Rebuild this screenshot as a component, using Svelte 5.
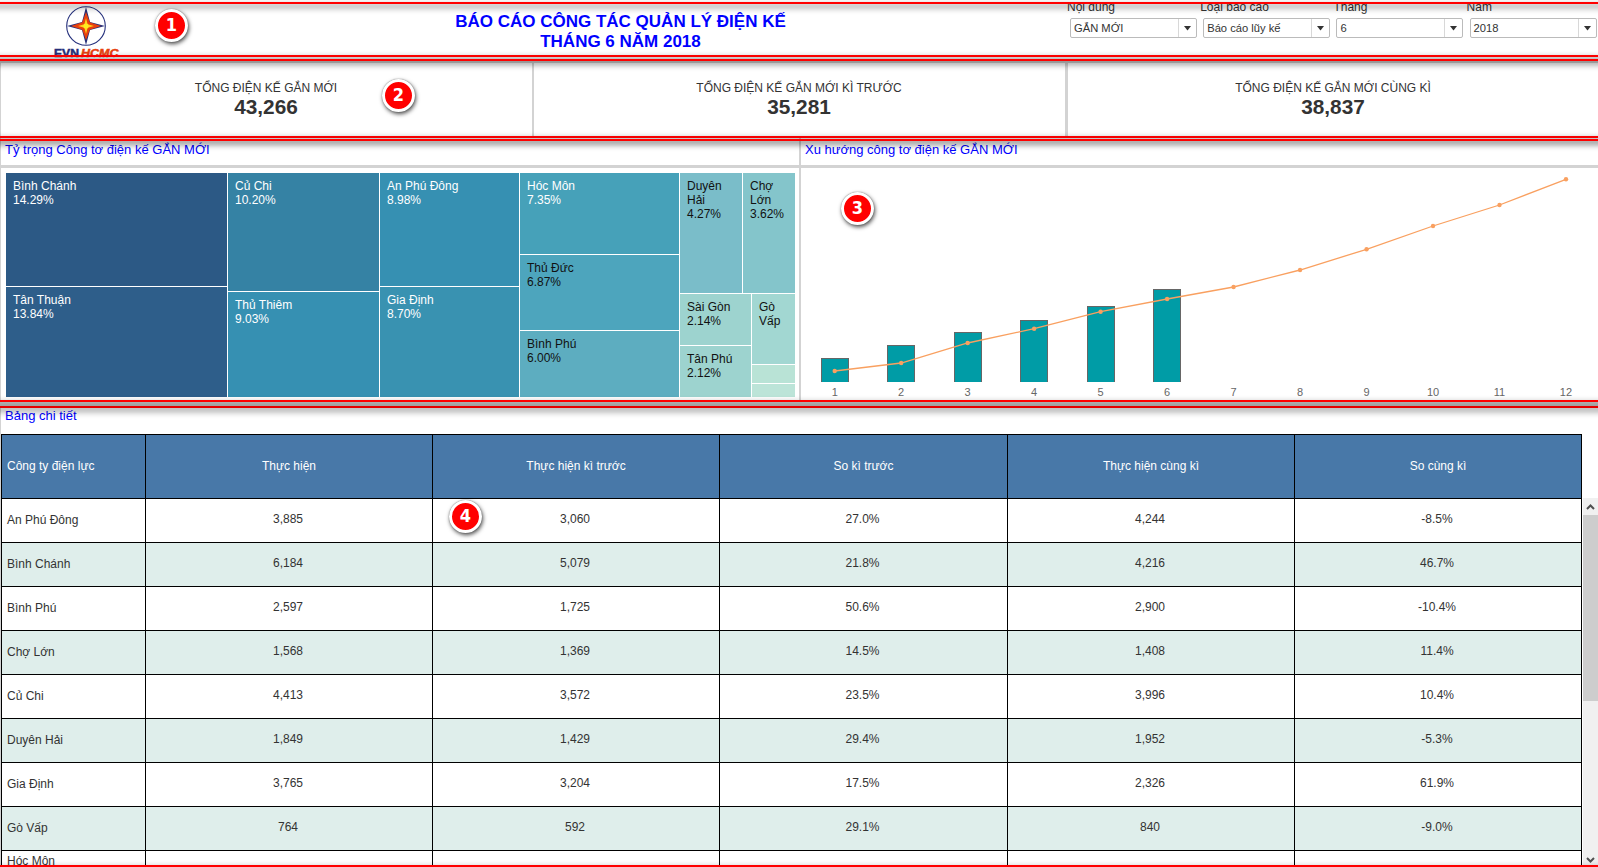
<script>
  const filters = [
    { label: 'Nội dung', value: 'GẮN MỚI' },
    { label: 'Loại báo cáo', value: 'Báo cáo lũy kế' },
    { label: 'Tháng', value: '6' },
    { label: 'Năm', value: '2018' }
  ];

  const kpis = [
    { label: 'TỔNG ĐIỆN KẾ GẮN MỚI', value: '43,266' },
    { label: 'TỔNG ĐIỆN KẾ GẮN MỚI KÌ TRƯỚC', value: '35,281' },
    { label: 'TỔNG ĐIỆN KẾ GẮN MỚI CÙNG KÌ', value: '38,837' }
  ];

  // Coordinates are local to the chart body (svg origin at its top-left corner).
  const points = [203, 195, 175, 160.7, 143.7, 131, 119, 102, 81.3, 58, 37, 11.3].map((y, i) => ({
    x: 33.7 + i * 66.48,
    y
  }));
  const line = points.map((p) => `${p.x},${p.y}`).join(' ');
  const bars = [
    [20, 190],
    [86, 177],
    [153, 164],
    [219, 152],
    [286, 138],
    [352, 121]
  ];

  const headers = ['Công ty điện lực', 'Thực hiện', 'Thực hiện kì trước', 'So kì trước', 'Thực hiện cùng kì', 'So cùng kì'];
  const rows = [
    ['An Phú Đông', '3,885', '3,060', '27.0%', '4,244', '-8.5%'],
    ['Bình Chánh', '6,184', '5,079', '21.8%', '4,216', '46.7%'],
    ['Bình Phú', '2,597', '1,725', '50.6%', '2,900', '-10.4%'],
    ['Chợ Lớn', '1,568', '1,369', '14.5%', '1,408', '11.4%'],
    ['Củ Chi', '4,413', '3,572', '23.5%', '3,996', '10.4%'],
    ['Duyên Hải', '1,849', '1,429', '29.4%', '1,952', '-5.3%'],
    ['Gia Định', '3,765', '3,204', '17.5%', '2,326', '61.9%'],
    ['Gò Vấp', '764', '592', '29.1%', '840', '-9.0%'],
    ['Hóc Môn', '', '', '', '', '']
  ];
</script>

{#snippet tile(name, pct, color, dark)}
  <div class="tile" class:dark style:background={color}>
    {#if name}<div>{name}</div>{/if}
    {#if pct}<div>{pct}</div>{/if}
  </div>
{/snippet}

<div class="page">
  <header>
    <svg class="logo" width="80" height="61" viewBox="0 0 80 61">
      <circle cx="41" cy="26" r="19.3" fill="#fff" stroke="#25307c" stroke-width="1.1" />
      <path d="M41 7 L45 22 L60 26 L45 30 L41 45 L37 30 L22 26 L37 22 Z" fill="#252d78" />
      <path d="M41 12 L44.8 22.2 L56 26 L44.8 29.8 L41 40 L37.2 29.8 L26 26 L37.2 22.2 Z" fill="#e8400e" />
      <path d="M41 18 L42.6 24.3 L49 26 L42.6 27.7 L41 34 L39.4 27.7 L33 26 L39.4 24.3 Z" fill="#ffd21c" />
      <circle cx="41" cy="26" r="2.6" fill="#ffed20" />
      <text x="9" y="57.2" textLength="25" lengthAdjust="spacingAndGlyphs" fill="#252d78" stroke="#252d78">EVN</text>
      <text x="36" y="57.2" textLength="37.5" lengthAdjust="spacingAndGlyphs" fill="#e8400e" stroke="#e8400e" font-style="italic">HCMC</text>
    </svg>
    <h1>BÁO CÁO CÔNG TÁC QUẢN LÝ ĐIỆN KẾ<br />THÁNG 6 NĂM 2018</h1>
    <div class="filters">
      {#each filters as f}
        <div class="filter">
          <div class="flabel">{f.label}</div>
          <div class="select">
            <span>{f.value}</span>
            <i><svg width="9" height="5" viewBox="0 0 9 5"><path d="M1 0h7L4.5 4.5z" fill="#333" /></svg></i>
          </div>
        </div>
      {/each}
    </div>
  </header>

  <section class="kpis">
    {#each kpis as k}
      <div class="kpi">
        <div class="klabel">{k.label}</div>
        <div class="kvalue">{k.value}</div>
      </div>
    {/each}
  </section>

  <section class="panels">
    <div class="panel left">
      <h2>Tỷ trọng Công tơ điện kế GẮN MỚI</h2>
      <div class="treemap">
        <div class="stack" style:grid-template-rows="113px 110px">
          {@render tile('Bình Chánh', '14.29%', '#2c5985')}
          {@render tile('Tân Thuận', '13.84%', '#2e5e8a')}
        </div>
        <div class="stack" style:grid-template-rows="118px 105px">
          {@render tile('Củ Chi', '10.20%', '#3582a4')}
          {@render tile('Thủ Thiêm', '9.03%', '#3690b2')}
        </div>
        <div class="stack" style:grid-template-rows="113px 110px">
          {@render tile('An Phú Đông', '8.98%', '#3690b2')}
          {@render tile('Gia Định', '8.70%', '#3992b1')}
        </div>
        <div class="stack" style:grid-template-rows="81px 75px 66px">
          {@render tile('Hóc Môn', '7.35%', '#46a1b9')}
          {@render tile('Thủ Đức', '6.87%', '#4da5bd', true)}
          {@render tile('Bình Phú', '6.00%', '#5dadc0', true)}
        </div>
        <div class="stack" style:grid-template-rows="120px 103px">
          <div class="split" style:grid-template-columns="62px 52px">
            {@render tile('Duyên Hải', '4.27%', '#7abdc9', true)}
            {@render tile('Chợ Lớn', '3.62%', '#84c5cb', true)}
          </div>
          <div class="split" style:grid-template-columns="71px 43px">
            <div class="stack" style:grid-template-rows="51px 51px">
              {@render tile('Sài Gòn', '2.14%', '#9dd3cf', true)}
              {@render tile('Tân Phú', '2.12%', '#9dd3cf', true)}
            </div>
            <div class="stack" style:grid-template-rows="70px 18px 13px">
              {@render tile('Gò Vấp', '', '#a2d7d2', true)}
              {@render tile('', '', '#b9e3d6', true)}
              {@render tile('', '', '#bce4d8', true)}
            </div>
          </div>
        </div>
      </div>
    </div>
    <div class="panel right">
      <h2>Xu hướng công tơ điện kế GẮN MỚI</h2>
      <svg class="chart" width="797" height="232" viewBox="0 0 797 232">
        {#each bars as [x, y]}
          <rect {x} {y} width="28" height={214 - y} fill="#666" />
          <rect x={x + 1} y={y + 1} width="26" height={213 - y} fill="#009ca6" />
        {/each}
        <polyline points={line} fill="none" stroke="#f9a060" stroke-width="1.3" />
        {#each points as p, i}
          <circle cx={p.x} cy={p.y} r="2.2" fill="#f9a060" />
          <text x={p.x} y="228" text-anchor="middle">{i + 1}</text>
        {/each}
      </svg>
    </div>
  </section>

  <section class="detail">
    <h2>Bảng chi tiết</h2>
    <div class="scroll">
      <div class="table">
        {#each headers as h}<div class="cell head">{h}</div>{/each}
        {#each rows as row, r}
          {#each row as c}<div class="cell" class:alt={r % 2 === 1} class:partial={r === rows.length - 1}>{c}</div>{/each}
        {/each}
      </div>
      <div class="scrollbar">
        <svg width="15" height="17" viewBox="0 0 15 17"><path d="M4 11 L7.5 7.5 L11 11" fill="none" stroke="#505050" stroke-width="2" /></svg>
        <div class="thumb"></div>
        <svg class="down" width="15" height="17" viewBox="0 0 15 17"><path d="M4 10 L7.5 13.5 L11 10" fill="none" stroke="#505050" stroke-width="2" /></svg>
      </div>
    </div>
  </section>

  <div class="frame" style="top:2px;height:55px"></div>
  <div class="frame" style="top:59px;height:79px"></div>
  <div class="frame" style="top:139px;height:263px"></div>
  <div class="frame last" style="top:406px;height:461px"></div>

  <div class="badge" style="left:155px;top:9px">1</div>
  <div class="badge" style="left:382px;top:79px">2</div>
  <div class="badge" style="left:841px;top:192px">3</div>
  <div class="badge" style="left:449px;top:500px">4</div>
</div>

<style>
  :global(body) { margin: 0; background: #fff; }
  * { box-sizing: border-box; }
  .page {
    position: relative;
    width: 1598px;
    height: 867px;
    overflow: hidden;
    display: flex;
    flex-direction: column;
    background: #fff;
    color: #333;
    font: 12px/14px "Liberation Sans", Arial, sans-serif;
  }
  header {
    display: flex;
    height: 63px;
    flex: none;
    border-bottom: 2px solid #d3d3d3;
  }
  .logo { margin-left: 45px; flex: none; }
  .logo text { font-size: 11.2px; font-weight: bold; stroke-width: 0.5px; }
  h1 {
    margin: 12px 0 0;
    width: 991px;
    flex: none;
    font-size: 17px;
    line-height: 20px;
    color: #00f;
    text-align: center;
  }
  .filters { display: flex; gap: 6.2px; margin-left: -46px; }
  .filter { width: 127px; flex: none; }
  .flabel { margin-left: -3px; height: 18px; line-height: 14px; white-space: nowrap; }
  .select {
    display: flex;
    height: 20px;
    border: 1px solid #bbb;
    border-radius: 2px;
    font-size: 11.2px;
    line-height: 18px;
  }
  .select span { flex: 1; padding-left: 3px; }
  .select i {
    width: 18px;
    border-left: 1px solid #d8d8d8;
    display: flex;
    align-items: center;
    justify-content: center;
  }

  .kpis {
    display: grid;
    grid-template-columns: 534px 534px 530px;
    height: 75px;
    flex: none;
    border-left: 1px solid #d3d3d3;
  }
  .kpi { padding: 18px 2px 0 0; text-align: center; }
  .kpi:nth-child(1) { margin-right: 1px; padding-right: 1px; border-right: 2px solid #d3d3d3; }
  .kpi:nth-child(2) { margin-right: 1px; margin-left: -1px; padding-right: 1px; border-right: 3px solid #d3d3d3; }
  .kvalue { margin-top: 2px; font-size: 20.8px; line-height: 20px; font-weight: bold; }

  h2 {
    margin: 0;
    padding-left: 4px;
    font-size: 13px;
    font-weight: normal;
    color: #00f;
    white-space: nowrap;
  }
  .panels {
    display: flex;
    height: 268px;
    flex: none;
    border-left: 1px solid #d3d3d3;
    border-bottom: 6px solid #d3d3d3;
  }
  .panel h2 { height: 30px; padding-top: 4px; line-height: 16px; border-bottom: 3px solid #d3d3d3; }
  .left { width: 800px; border-right: 2px solid #d3d3d3; }
  .right { flex: 1; }
  .treemap {
    display: grid;
    grid-template-columns: 221px 151px 139px 159px 115px;
    gap: 1px;
    margin: 5px 0 0 5px;
  }
  .stack, .split { display: grid; gap: 1px; }
  .tile { padding: 6px 12px 0 7px; color: #fff; overflow: hidden; }
  .tile.dark { color: #111; padding-right: 7px; }
  .chart { display: block; }
  .chart text { font-size: 11px; fill: #666; }

  .detail { flex: 1; min-height: 0; border-left: 1px solid #d3d3d3; }
  .detail h2 { height: 28px; padding-top: 2px; line-height: 16px; }
  .scroll { display: flex; height: 433px; overflow: hidden; }
  .table {
    display: grid;
    grid-template-columns: 144px 287px 287px 288px 287px 287px;
    grid-template-rows: 64px;
    grid-auto-rows: 44px;
    width: 1581px;
    flex: none;
    border-right: 1px solid #000;
  }
  .cell {
    border-left: 1px solid #000;
    border-top: 1px solid #000;
    padding: 13px 2px 0 0;
    text-align: center;
  }
  .cell:nth-child(6n + 1) { text-align: left; padding-left: 5px; padding-top: 14px; }
  .cell.head, .cell.head:nth-child(6n + 1) { background: #4878a8; color: #fff; padding-top: 24px; padding-right: 0; }
  .cell.partial:nth-child(6n + 1) { padding-top: 4px; line-height: 12px; }
  .alt { background: #dfeeeb; }
  .scrollbar {
    margin: 64px 0 2px 1px;
    width: 15px;
    height: 367px;
    background: #f0f0f0;
    display: flex;
    flex-direction: column;
  }
  .thumb { height: 186px; background: #cdcdcd; }
  .down { margin-top: auto; }

  .frame {
    position: absolute;
    left: -14px;
    right: -14px;
    border: 2px solid #f00;
    filter: drop-shadow(0 3px 3px rgba(0, 0, 0, 0.75));
    pointer-events: none;
  }
  .last { border-top-color: #e60000; }
  .badge {
    position: absolute;
    width: 33px;
    height: 33px;
    border: 3.5px solid #fff;
    border-radius: 50%;
    background: #f00;
    box-shadow: 1px 2px 4px rgba(0, 0, 0, 0.7), 0 0 1px rgba(0, 0, 0, 0.6);
    color: #fff;
    font: bold 18px/26px "DejaVu Sans Condensed", "DejaVu Sans", sans-serif;
    font-stretch: condensed;
    text-align: center;
  }
</style>
